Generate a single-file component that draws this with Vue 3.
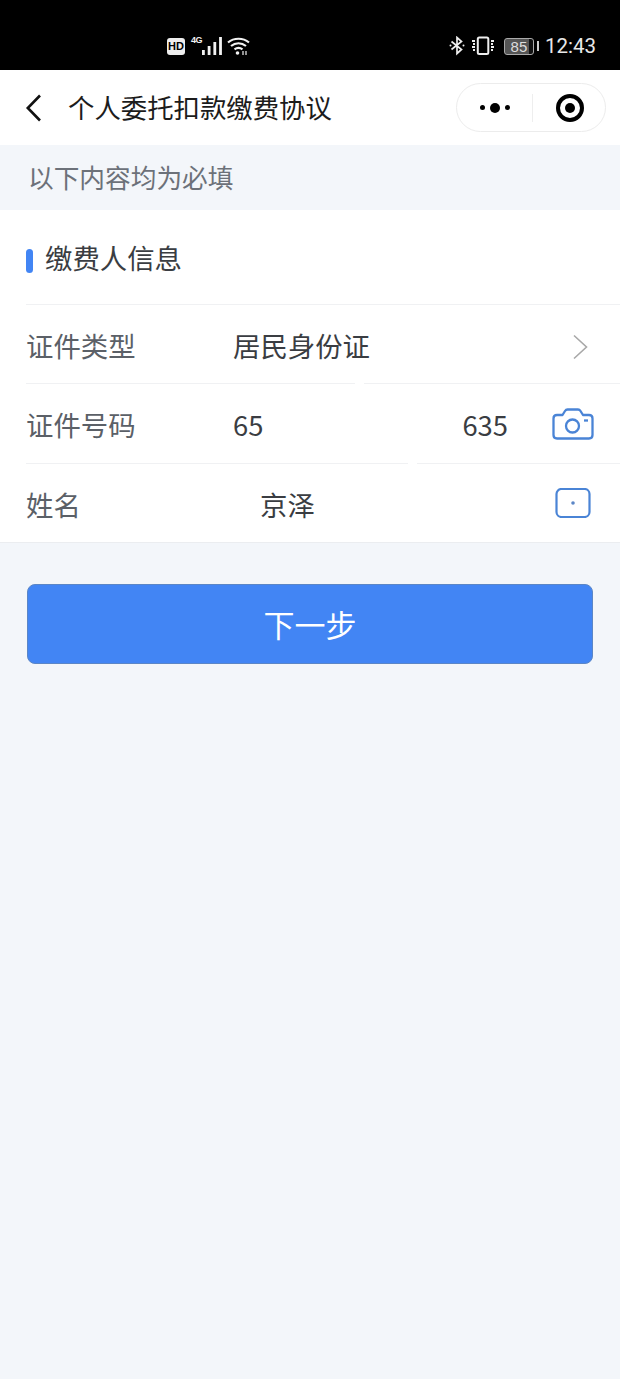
<script setup>
const rows = [
  { label: '证件类型', kind: 'arrow', gap: null },
  { label: '证件号码', kind: 'camera', gap: 329 },
  { label: '姓名', kind: 'card', gap: 382 }
]
</script>

<template>
  <div class="page">
    <div class="status">
      <div class="status-left">
        <span class="hd">HD</span>
        <span class="net">4G</span>
        <svg class="signal" width="20" height="18" viewBox="0 0 20 18">
          <rect x="0" y="13" width="2.800" height="5" fill="#f2f2f2" />
          <rect x="5.700" y="9" width="2.800" height="9" fill="#f2f2f2" />
          <rect x="11.400" y="5" width="2.800" height="13" fill="#f2f2f2" />
          <rect x="17.100" y="0" width="2.800" height="18" fill="#f2f2f2" />
        </svg>
        <svg class="wifi" width="23" height="18" viewBox="0 0 23 18" fill="none" stroke="#f2f2f2" stroke-width="2.200">
          <path d="M1 5.500C7 0.500 16 0.500 22 5.500" />
          <path d="M4 9C8.500 5.300 14.500 5.300 19 9" />
          <path d="M7.500 12.300C10 10.500 13 10.500 15.500 12.300" />
          <circle cx="10.500" cy="16" r="1.800" fill="#f2f2f2" stroke="none" />
          <path d="M16 14v4M19 14v4" stroke-width="1.200" />
        </svg>
      </div>
      <div class="status-right">
        <svg class="bt" width="16" height="20" viewBox="0 0 16 20" fill="none" stroke="#eee" stroke-width="1.700">
          <path d="M2.500 5.500L12.500 13.500L8 17.500V1.500L12.500 5.500L2.500 13.500" />
          <circle cx="1.500" cy="9.500" r="1" fill="#eee" stroke="none" />
          <circle cx="14.500" cy="9.500" r="1" fill="#eee" stroke="none" />
        </svg>
        <svg class="vib" width="25" height="20" viewBox="0 0 25 20" fill="none" stroke="#eee">
          <rect x="6.800" y="1.500" width="10.500" height="16.500" rx="1.500" stroke-width="2" />
          <path d="M1 5h3M2 8h2M1 11h3M2 14h2M20 5h3M20 8h2M20 11h3M20 14h2" stroke-width="1.800" />
        </svg>
        <span class="battery"><span class="battery-num">85</span></span>
        <span class="battery-tip"></span>
        <span class="time">12:43</span>
      </div>
    </div>

    <header class="nav">
      <svg class="back" width="18" height="30" viewBox="0 0 18 30" fill="none" stroke="#111" stroke-width="2.600">
        <path d="M15 3.500L2.800 16L15 28.500" />
      </svg>
      <h1 class="title">个人委托扣款缴费协议</h1>
      <div class="capsule">
        <div class="capsule-part left">
          <span class="dot small"></span>
          <span class="dot big"></span>
          <span class="dot small"></span>
        </div>
        <span class="capsule-line"></span>
        <div class="capsule-part right">
          <span class="target"><span class="target-dot"></span></span>
        </div>
      </div>
    </header>

    <div class="notice">以下内容均为必填</div>

    <section class="form">
      <div class="section-head">
        <span class="mark"></span>
        <span class="section-title">缴费人信息</span>
      </div>
      <div v-for="row in rows" :key="row.label" class="row">
        <span v-if="row.gap" class="line-gap" :style="{ left: row.gap + 'px' }"></span>
        <span class="label">{{ row.label }}</span>
        <div class="value">
          <template v-if="row.kind === 'arrow'">居民身份证</template>
          <template v-else-if="row.kind === 'camera'">
            <span>65</span><span class="tail">635</span>
          </template>
          <span v-else class="name">京泽</span>
        </div>
        <svg v-if="row.kind === 'arrow'" class="ico-arrow" width="16" height="26" viewBox="0 0 16 26" fill="none" stroke="#a8a8a8" stroke-width="1.600">
          <path d="M2 1.500L14.500 13L2 24.500" />
        </svg>
        <svg v-else-if="row.kind === 'camera'" class="ico-camera" width="42" height="32" viewBox="0 0 42 32" fill="none" stroke="#4a84d6" stroke-width="2.300" stroke-linejoin="round">
          <path d="M5 7H10.500L13 3C13.700 1.900 14.500 1.500 15.500 1.500H26C27 1.500 27.800 1.900 28.500 3L31 7H37C39 7 40.500 8.500 40.500 10.500V27C40.500 29 39 30.500 37 30.500H5C3 30.500 1.500 29 1.500 27V10.500C1.500 8.500 3 7 5 7Z" />
          <circle cx="20.500" cy="18" r="6.500" />
          <path d="M32 12.500H36" />
        </svg>
        <svg v-else class="ico-card" width="36" height="30" viewBox="0 0 36 30" fill="none" stroke="#4a84d6" stroke-width="2.200">
          <rect x="1.500" y="1" width="33" height="28" rx="5" />
          <circle cx="18" cy="15" r="1.800" fill="#5b86c6" stroke="none" />
        </svg>
      </div>
    </section>

    <div class="action">
      <button class="next" type="button">下一步</button>
    </div>
  </div>
</template>

<style>
html, body { margin: 0; background: #f3f6fa; }
</style>

<style scoped>
.page {
  width: 620px;
  height: 1379px;
  overflow: hidden;
  background: #f3f6fa;
  font-family: "Noto Sans CJK SC", "Noto Sans", sans-serif;
}
.status {
  height: 70px;
  background: #000;
  color: #fff;
  display: flex;
  align-items: flex-end;
  justify-content: space-between;
  box-sizing: border-box;
  padding: 0 24px 14px 167px;
}
.status-left, .status-right { display: flex; align-items: center; height: 20px; }
.hd {
  width: 18px;
  height: 17px;
  border-radius: 3px;
  background: #eee;
  color: #000;
  font: 700 11px/17px "Liberation Sans", sans-serif;
  text-align: center;
}
.net {
  font: 700 9px/10px "Liberation Sans", sans-serif;
  margin: -12px 0 0 6px;
  width: 10px;
  letter-spacing: -0.5px;
  color: #f2f2f2;
}
.signal { margin-left: 1px; }
.wifi { margin-left: 5px; }
.bt { margin-right: 6px; }
.vib { margin-right: 8px; }
.battery {
  width: 30px;
  height: 17px;
  box-sizing: border-box;
  border: 1px solid #aaa;
  border-radius: 3px;
  background: linear-gradient(90deg, #555 85%, #111 85%);
  display: flex;
  align-items: center;
  justify-content: center;
}
.battery-num { font: 15px/15px "Liberation Sans", sans-serif; color: #ddd; }
.battery-tip { width: 2px; height: 10px; background: #ccc; margin: 0 6px 0 3px; }
.time { font: 20.500px/24px Roboto, "Liberation Sans", sans-serif; color: #e8e8e8; }

.nav {
  height: 75px;
  background: #fff;
  display: flex;
  align-items: center;
  padding-left: 25px;
  position: relative;
}
.back { margin-top: -2px; }
.title {
  margin: -2px 0 0 25px;
  font-size: 26.400px;
  line-height: 36px;
  font-weight: 400;
  color: #1c1c1c;
  white-space: nowrap;
}
.capsule {
  position: absolute;
  left: 456px;
  top: 13px;
  width: 150px;
  height: 49px;
  box-sizing: border-box;
  border: 1px solid #ececec;
  border-radius: 25px;
  display: flex;
  align-items: center;
}
.capsule-part { display: flex; align-items: center; justify-content: center; gap: 5px; }
.capsule-part.left { width: 75px; }
.capsule-part.right { flex: 1; padding-left: 2px; }
.capsule-line { width: 1px; height: 28px; background: #eee; }
.dot { background: #000; border-radius: 50%; display: block; }
.small { width: 5px; height: 5px; }
.big { width: 10px; height: 10px; }
.target {
  width: 28px;
  height: 28px;
  box-sizing: border-box;
  border: 4px solid #000;
  border-radius: 50%;
  display: flex;
  align-items: center;
  justify-content: center;
}
.target-dot { width: 10px; height: 10px; border-radius: 50%; background: #000; }

.notice {
  height: 65px;
  line-height: 63px;
  box-sizing: border-box;
  padding-left: 28px;
  font-size: 25.700px;
  color: #6c7179;
}

.form { background: #fff; border-bottom: 1px solid #ebedf0; }
.section-head {
  height: 94px;
  display: flex;
  align-items: center;
  padding-left: 26px;
  box-sizing: border-box;
}
.mark { width: 7px; height: 24px; border-radius: 4px; background: #4285f4; margin-top: 8px; }
.section-title { margin-left: 12px; font-size: 27.400px; color: #3a3d42; }
.row {
  height: 79.300px;
  margin-left: 26px;
  border-top: 1px solid #f0f1f3;
  box-sizing: border-box;
  display: flex;
  align-items: center;
  font-size: 27.400px;
  position: relative;
}
.line-gap { position: absolute; top: -1px; width: 9px; height: 1px; background: #fff; }
.label { width: 207px; color: #5b6067; margin-top: 2px; }
.value { flex: 1; color: #3a3d42; margin-top: 2px; display: flex; }
.tail { margin-left: 199px; }
.name { margin-left: 27px; }
.ico-arrow { position: absolute; left: 546px; top: 29px; }
.ico-camera { position: absolute; left: 526px; top: 24px; }
.ico-card { position: absolute; left: 529px; top: 24px; }

.action { padding: 41px 27px 0 27px; }
.next {
  display: block;
  width: 566px;
  height: 80px;
  border: 1px solid #5b86c6;
  border-radius: 8px;
  background: #4285f4;
  color: #fff;
  font-family: inherit;
  font-size: 31px;
  padding: 0;
}
</style>
